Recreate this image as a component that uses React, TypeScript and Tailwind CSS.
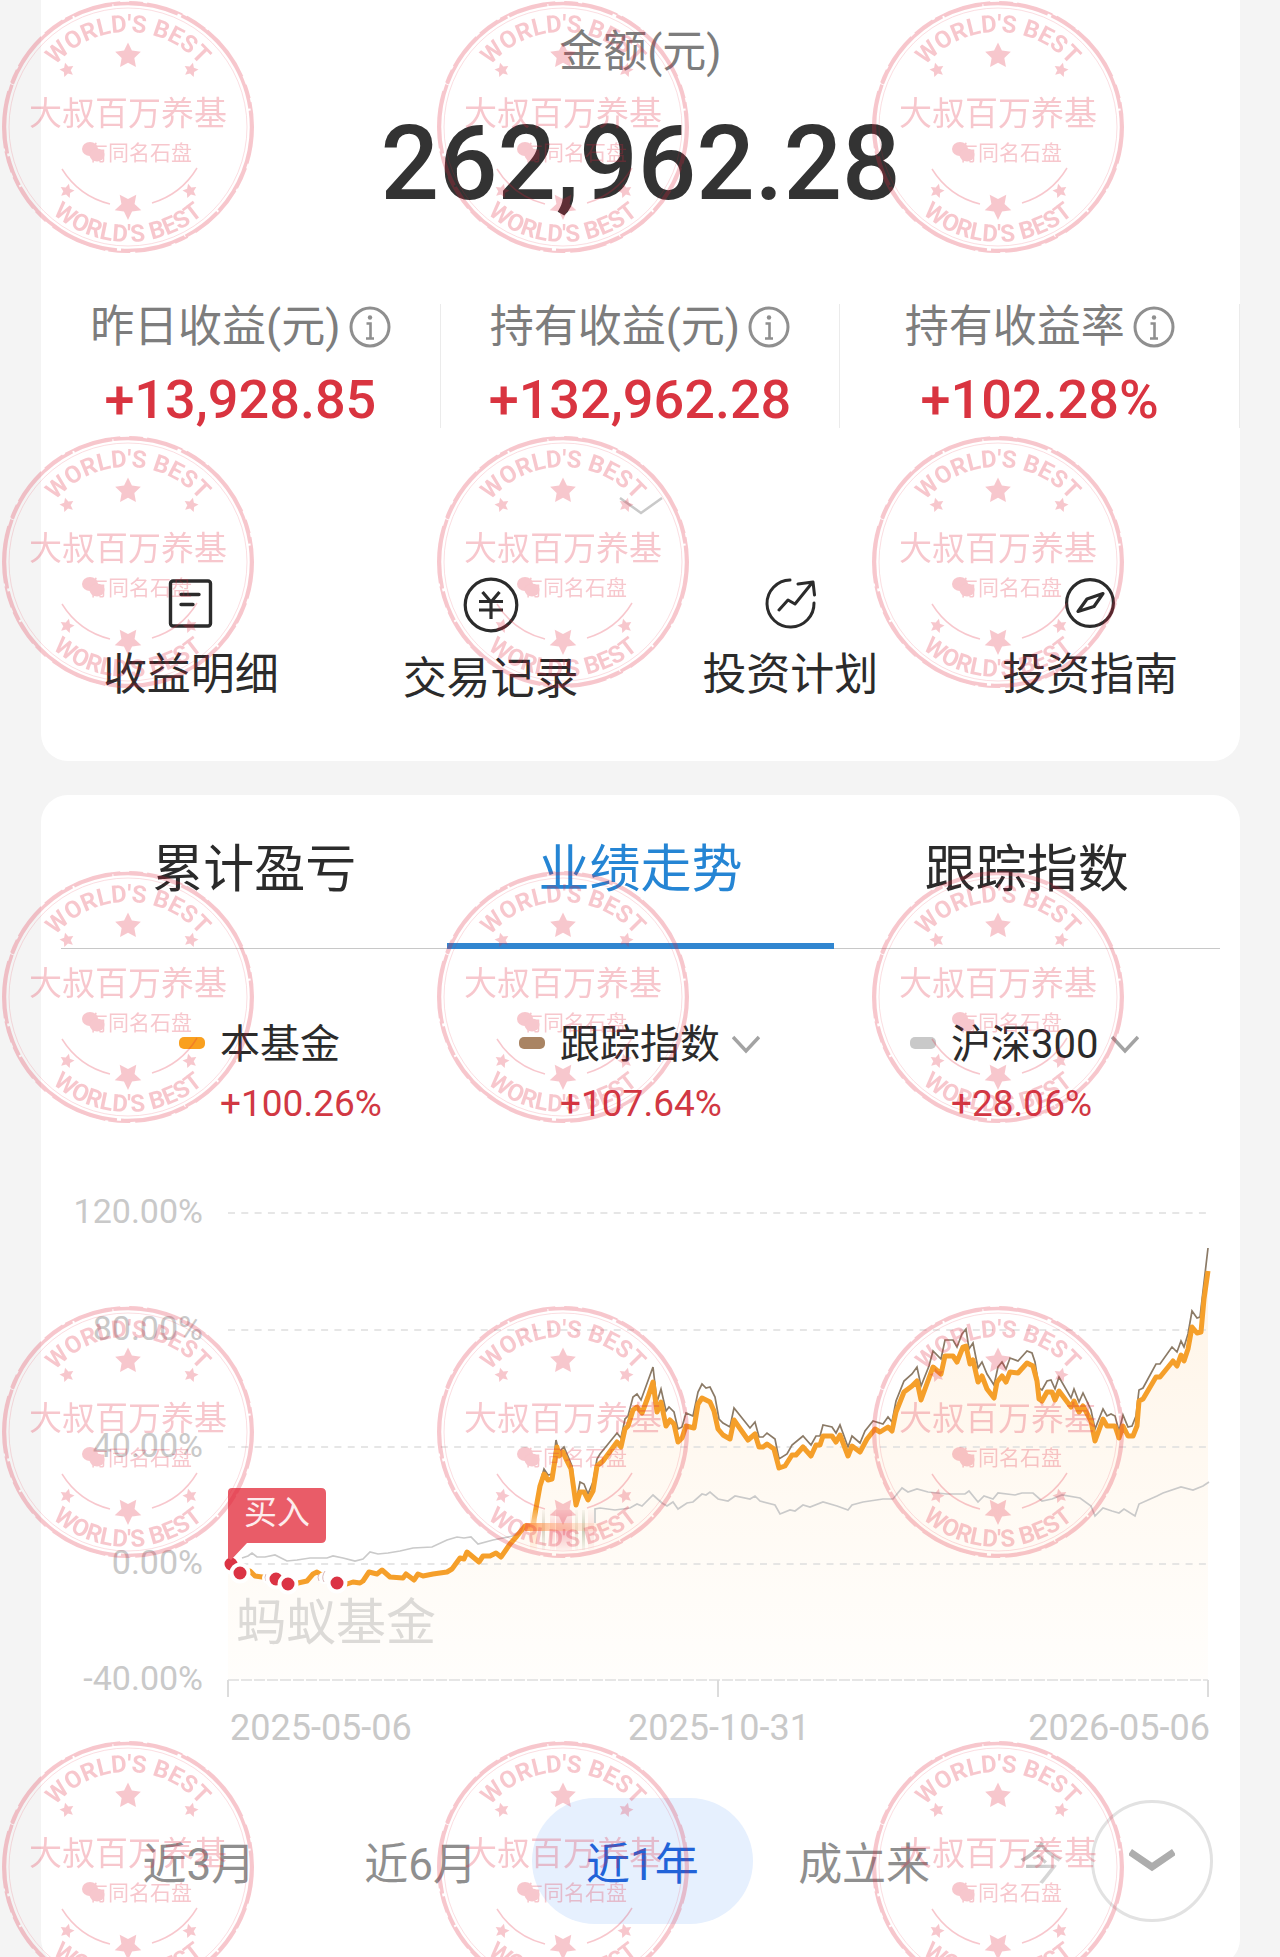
import React, { useState } from 'react'
import clsx from 'clsx'

const PINK = '#e2233b'
const STAR = 'M0 -10 L2.9 -4 L9.5 -3.1 L4.7 1.5 L5.9 8.1 L0 5 L-5.9 8.1 L-4.7 1.5 L-9.5 -3.1 L-2.9 -4 Z'

const fundLine =
    '3,351 12,360 22,358 27,363 34,364 41,364 48,366 60,371 70,370 79,368 85,361 89,359 97,364 109,370 119,371 125,369 132,370 135,368 141,359 149,361 154,357 162,364 175,365 178,361 186,367 190,361 195,363 205,361 219,359 224,356 232,345 236,346 239,339 251,349 255,343 262,343 268,340 273,344 282,331 289,323 297,313 305,313 307,301 312,273 316,261 320,267 324,266 329,234 331,243 335,239 339,248 343,256 348,292 352,279 356,279 360,287 365,278 369,253 375,248 389,229 393,234 397,216 400,213 405,197 409,194 414,200 420,184 425,169 429,199 433,189 438,213 442,207 446,211 450,229 454,225 458,213 466,215 470,191 474,185 482,189 486,198 490,216 495,222 502,226 506,207 520,227 527,221 531,234 535,234 539,231 546,236 551,255 557,253 564,242 568,242 575,234 583,243 588,232 592,232 595,223 604,223 608,229 612,222 620,243 624,233 632,239 639,226 647,216 652,219 660,214 664,218 668,199 676,179 684,173 689,168 693,187 697,176 705,154 713,161 717,143 725,143 729,149 735,134 738,133 742,151 745,147 750,169 754,163 759,176 766,185 769,169 774,163 778,169 782,159 790,160 799,150 805,153 809,168 811,186 814,188 819,179 824,179 827,187 831,178 843,194 846,188 851,199 855,193 863,208 867,228 875,206 879,213 887,213 891,225 895,213 900,223 905,223 909,213 911,188 915,186 928,164 932,164 945,148 949,153 953,142 956,148 960,136 964,114 969,120 973,119 976,86 980,58'

const indexLine =
    '307,300 312,270 316,256 320,262 324,261 328,227 331,239 336,234 344,253 348,290 352,269 356,271 360,281 365,269 369,246 372,241 389,220 393,225 397,206 400,203 405,184 409,181 413,187 425,154 429,189 433,176 438,198 441,194 446,199 450,216 454,214 458,200 465,203 470,179 474,171 478,175 482,174 487,184 491,206 495,210 502,214 506,195 522,215 527,209 531,224 535,224 539,220 547,226 551,246 559,241 564,232 575,223 583,232 588,223 592,223 595,212 604,214 608,220 612,212 620,234 624,223 632,230 637,218 645,208 655,211 660,204 664,209 668,188 676,168 684,161 689,154 693,173 701,153 705,138 713,146 717,127 725,127 729,134 734,121 738,116 741,136 745,130 750,155 754,149 759,161 766,172 770,154 774,149 778,156 782,145 790,148 799,138 804,140 807,149 811,175 814,177 819,168 823,167 827,176 831,164 843,185 846,176 851,189 855,180 863,197 867,216 875,196 879,203 883,201 887,203 891,218 895,202 900,214 904,213 908,203 911,177 915,175 928,151 932,151 944,134 949,139 953,128 956,134 960,121 964,98 969,105 972,104 980,35'

const marketStart =
    '14,345 20,343 24,340 29,344 37,344 47,342 59,348 69,347 82,345 99,345 105,343 115,345 127,348 135,346 142,339 150,341 160,340 172,338 185,335 204,334 219,327 229,324 236,325 243,324 250,331 265,327 285,323 292,318'

const marketEnd =
    '367,310 367,296 372,295 387,297 402,295 409,291 414,293 425,282 434,290 439,293 445,289 450,296 459,290 465,289 474,281 478,282 482,279 490,286 500,288 507,283 522,286 527,283 532,288 547,292 552,301 562,297 567,298 575,292 582,294 595,289 609,293 620,297 624,292 635,289 655,286 665,286 674,275 680,279 689,276 700,279 719,281 737,281 741,278 750,289 756,283 765,286 770,280 787,282 794,280 805,280 814,288 824,286 834,282 852,285 863,293 867,303 875,295 884,298 891,300 896,296 907,303 911,291 929,283 935,280 953,274 965,277 975,273 981,269'

const yTicks = [
    { label: '120.00%', y: 0 },
    { label: '80.00%', y: 117 },
    { label: '40.00%', y: 234 },
    { label: '0.00%', y: 351 },
    { label: '-40.00%', y: 467 },
]

const buyPoints = [
    [3, 351],
    [12, 360],
    [48, 366],
    [60, 371],
    [109, 370],
]

const stats = [
    { label: '昨日收益(元)', value: '+13,928.85' },
    { label: '持有收益(元)', value: '+132,962.28' },
    { label: '持有收益率', value: '+102.28%' },
]

const tabs = ['累计盈亏', '业绩走势', '跟踪指数']
const ranges = ['近3月', '近6月', '近1年', '成立来']

const InfoIcon = () => (
    <svg viewBox="0 0 42 42" className="w-[42px] h-[42px] shrink-0" fill="none" stroke="#8f8f8f">
        <circle cx="21" cy="21" r="19" strokeWidth="3" />
        <circle cx="21" cy="11.500" r="2.200" fill="#8f8f8f" stroke="none" />
        <path d="M17.500 17.500 H21.500 V32 M17 32.500 H25" strokeWidth="2.600" />
    </svg>
)

const DetailIcon = () => (
    <svg viewBox="-26 -26 52 52" className="w-[52px] h-[52px]" fill="none" stroke="#2b2b2b" strokeWidth="3.400" strokeLinecap="round">
        <rect x="-20.500" y="-22" width="40" height="45" rx="2.500" />
        <path d="M-10 -8.500 H8 M-10 1.500 H2" />
    </svg>
)

const RecordIcon = () => (
    <svg viewBox="-28 -28 56 56" className="w-14 h-14" fill="none" stroke="#2b2b2b" strokeWidth="3.200">
        <circle r="25.800" />
        <path d="M-8.500 -13 L0 -3 L8.500 -13 M-12 -3.500 H12 M-12 5 H12 M0 -3.500 V14" />
    </svg>
)

const PlanIcon = () => (
    <svg viewBox="-26 -26 52 52" className="w-[52px] h-[52px]" fill="none" stroke="#2b2b2b" strokeWidth="3" strokeLinecap="round" strokeLinejoin="round">
        <path d="M0 -23 A23.500 23.500 0 1 0 24 0" />
        <path d="M-11 7 L-2 -3 L5 1 L22 -20 M8 -19 L23 -21 L24.500 -8" />
    </svg>
)

const GuideIcon = () => (
    <svg viewBox="-26 -26 52 52" className="w-[52px] h-[52px]" fill="none" stroke="#2b2b2b" strokeWidth="3.200" strokeLinejoin="round">
        <circle r="23.400" />
        <path d="M13 -9.500 L-3 -4 L-12 8.500 L4 3.500 Z" />
    </svg>
)

const actions = [
    { label: '收益明细', icon: <DetailIcon /> },
    { label: '交易记录', icon: <RecordIcon /> },
    { label: '投资计划', icon: <PlanIcon /> },
    { label: '投资指南', icon: <GuideIcon /> },
]

const Stamp = ({ id }: { id: string }) => (
    <svg viewBox="-1 0 256 256" className="w-64 h-64" fill={PINK}>
        <defs>
            <path id={`${id}-top`} d="M32 127 A95 95 0 0 1 222 127" />
            <path id={`${id}-bottom`} d="M12 127 A115 115 0 0 0 242 127" />
        </defs>
        <g fill="none" stroke={PINK}>
            <circle cx="127" cy="127" r="123.500" strokeWidth="3.500" strokeDasharray="92 2 40 1 66 4 120 2 31 3 70 1" />
            <circle cx="127" cy="127" r="125" strokeWidth="2" strokeDasharray="37 5 22 3 58 9 14 4" />
            <circle cx="127" cy="127" r="119" strokeWidth="1" opacity="0.6" />
            <path d="M61 169 A79 79 0 0 0 109 204 M151 203 A79 79 0 0 0 196 168" strokeWidth="1.500" />
        </g>
        <g fontFamily="Roboto, sans-serif" fontWeight="700" fontSize="24" textAnchor="middle">
            <text><textPath href={`#${id}-top`} startOffset="50%">WORLD'S BEST</textPath></text>
            <text><textPath href={`#${id}-bottom`} startOffset="50%">WORLD'S BEST</textPath></text>
        </g>
        <path d={STAR} transform="translate(127 56) scale(1.35)" />
        <path d={STAR} transform="translate(66 70) rotate(-15) scale(0.75)" />
        <path d={STAR} transform="translate(190 70) rotate(15) scale(0.75)" />
        <path d={STAR} transform="translate(127 206) rotate(180) scale(1.4)" />
        <path d={STAR} transform="translate(66 191) rotate(15) scale(0.75)" />
        <path d={STAR} transform="translate(189 191) rotate(-15) scale(0.75)" />
        <g fontFamily="'Noto Sans CJK SC', sans-serif">
            <text x="127" y="125" fontSize="33" textAnchor="middle">大叔百万养基</text>
            <text x="191" y="160" fontSize="21" textAnchor="end">有同名石盘</text>
        </g>
        <ellipse cx="89" cy="149" rx="8" ry="7" />
        <ellipse cx="96" cy="155" rx="7.500" ry="6.500" />
    </svg>
)

const Watermark = () => (
    <div aria-hidden="true" className="absolute inset-0 overflow-hidden pointer-events-none opacity-25 grid grid-cols-[435px_435px_435px] auto-rows-[435px] content-start">
        {
            Array.from({ length: 15 }, (_, i) => <Stamp key={i} id={`stamp-${i}`} />)
        }
    </div>
)

interface LegendItemProps {
    name: string
    value: string
    swatch: string
    selectable?: boolean
}

const LegendItem = ({ name, value, swatch, selectable }: LegendItemProps) => (
    <div className="flex gap-[15px] whitespace-nowrap">
        <span className={clsx('mt-5 w-[26px] h-3 rounded-[5px] shrink-0', swatch)} />
        <div>
            <div className="flex items-center gap-3 h-14 text-[40px] leading-[56px] text-[#2b2b2b]">
                {
                    selectable ? (
                        <>
                            <select aria-label={name} className="appearance-none bg-transparent h-14 leading-[56px] outline-none">
                                <option>{name}</option>
                            </select>
                            <svg viewBox="0 0 28 20" className="w-7 h-5" fill="none" stroke="#a3a3a3" strokeWidth="3.500">
                                <path d="M1 2 L14 16 L27 2" />
                            </svg>
                        </>
                    ) : (
                        <span>{name}</span>
                    )
                }
            </div>
            <p className="mt-[9px] text-[37px] leading-[44px] text-[#d13843]">{value}</p>
        </div>
    </div>
)

const TrendChart = () => (
    <svg viewBox="-187 -40 1199 580" className="block w-full mt-[47px]" fontFamily="Roboto, 'Noto Sans CJK SC', sans-serif">
        <defs>
            <linearGradient id="area" x1="0" y1="0" x2="0" y2="1">
                <stop offset="0" stopColor="#ff9a1f" stopOpacity="0.11" />
                <stop offset="1" stopColor="#ffb84d" stopOpacity="0.02" />
            </linearGradient>
            <linearGradient id="smear" x1="0" y1="0" x2="1" y2="0">
                <stop offset="0" stopColor="#ff9440" stopOpacity="0.9" />
                <stop offset="0.3" stopColor="#ffa873" stopOpacity="0.5" />
                <stop offset="1" stopColor="#ffc9a0" stopOpacity="0" />
            </linearGradient>
            <linearGradient id="streak" x1="0" y1="0" x2="0" y2="1">
                <stop offset="0" stopColor="#fff" stopOpacity="0.1" />
                <stop offset="0.5" stopColor="#fff" stopOpacity="1" />
                <stop offset="1" stopColor="#fff" stopOpacity="0.1" />
            </linearGradient>
            <mask id="fade">
                <rect x="290" y="296" width="100" height="42" fill="url(#streak)" />
            </mask>
        </defs>

        <polygon points={`${fundLine} 980,467 0,467 0,351`} fill="url(#area)" />

        {
            yTicks.map((tick) => (
                <g key={tick.label}>
                    <line x1="0" x2="980" y1={tick.y} y2={tick.y} stroke="#dedede" strokeWidth="1.500" strokeDasharray={tick.y === 467 ? '11 2' : '7 6.300'} />
                    <text x="-25" y={tick.y + 10} textAnchor="end" fontSize="34" fill="#c9c9c9">{tick.label}</text>
                </g>
            ))
        }
        <path d="M0 467 V484 M490 467 V484 M980 467 V484" stroke="#dcdcdc" strokeWidth="2" />

        <text x="8" y="427" fontSize="50" fill="#dcdad7">蚂蚁基金</text>

        <polyline points={marketStart} fill="none" stroke="#cacaca" strokeWidth="1.700" />
        <polyline points={marketEnd} fill="none" stroke="#cacaca" strokeWidth="1.700" />
        <polyline points={indexLine} fill="none" stroke="#8b7a66" strokeWidth="1.700" />
        <polyline points={fundLine} fill="none" stroke="#f59f2a" strokeWidth="5" strokeLinejoin="round" />

        <g mask="url(#fade)">
            <rect x="302" y="297" width="7" height="40" fill="#ffe0bf" />
            <rect x="314" y="297" width="3" height="40" fill="#d9d3c4" />
            <rect x="322" y="297" width="5" height="40" fill="#fbd5d4" />
            <rect x="328" y="297" width="16" height="40" fill="#f5b9bf" />
            <rect x="347" y="297" width="3" height="40" fill="#e6e2d2" />
            <rect x="354" y="297" width="3" height="40" fill="#c9cdb8" />
            <rect x="360" y="297" width="6" height="40" fill="#fbe0dc" />
        </g>
        <rect x="297" y="310" width="95" height="8" fill="url(#smear)" />

        {
            [40, 96, 102].map((x) => (
                <circle key={x} cx={x} cy={365} r="4" fill="#fff" stroke="#fff" strokeWidth="4" />
            ))
        }
        <path d="M38 361 Q36 364 38 368 M91 361 Q89 364 91 368 M97 358 Q93 364 96 369" fill="none" stroke="#d9b9bb" strokeWidth="1" />
        {
            buyPoints.map(([x, y]) => (
                <circle key={x} cx={x} cy={y} r="8.500" fill="#db3344" stroke="#fff" strokeWidth="4" />
            ))
        }
        <path d="M4 275 H93 Q98 275 98 280 V325 Q98 330 93 330 H19 L3 347 L0 345 V279 Q0 275 4 275 Z" fill="#e95c68" />
        <text x="49" y="311" fontSize="33" textAnchor="middle" fill="#fdeced">买入</text>

        <g fontSize="36" fill="#c9c9c9">
            <text x="2" y="527">2025-05-06</text>
            <text x="491" y="527" textAnchor="middle">2025-10-31</text>
            <text x="982" y="527" textAnchor="end">2026-05-06</text>
        </g>
    </svg>
)

const App = () => {
    const [activeTab, setActiveTab] = useState('业绩走势')
    const [activeRange, setActiveRange] = useState('近1年')

    return (
        <div className="relative h-screen overflow-hidden bg-[#f4f4f4] pl-[41px] pr-10 font-[Roboto,'Noto_Sans_CJK_SC',sans-serif]">
            <section className="bg-white rounded-b-[27px] pt-5 pb-[52px]">
                <div className="text-center">
                    <p className="text-[44px] leading-[64px] text-[#7d7d7d]">金额(元)</p>
                    <p className="mt-5 text-[103px] leading-[120px] font-medium text-[#333]">262,962.28</p>
                </div>

                <div className="mt-20 grid grid-cols-3">
                    {
                        stats.map((stat) => (
                            <div key={stat.label} className="flex flex-col items-center border-r border-[#ebebeb]">
                                <div className="flex items-center gap-2 text-[44px] leading-[46px] text-[#7d7d7d] whitespace-nowrap">
                                    <span>{stat.label}</span>
                                    <InfoIcon />
                                </div>
                                <p className="mt-[22px] text-[54px] leading-[56px] font-medium text-[#d93440]">{stat.value}</p>
                            </div>
                        ))
                    }
                </div>

                <button aria-label="展开" className="block mx-auto mt-[69px]">
                    <svg viewBox="0 0 44 18" className="w-11 h-[18px]" fill="none" stroke="#c9c9c9" strokeWidth="2.500">
                        <path d="M1 1 L22 16 L43 1" />
                    </svg>
                </button>

                <div className="mt-[62px] grid grid-cols-4 items-start">
                    {
                        actions.map((action) => (
                            <button key={action.label} className="flex flex-col items-center gap-4 text-[44px] leading-[60px] text-[#2b2b2b] whitespace-nowrap">
                                {action.icon}
                                <span>{action.label}</span>
                            </button>
                        ))
                    }
                </div>
            </section>

            <section className="mt-[34px] bg-white rounded-[27px] pb-[42px]">
                <div role="tablist" className="mx-5 grid grid-cols-3 shadow-[inset_0_-1px_0_#c8c8c8]">
                    {
                        tabs.map((tab) => (
                            <button
                                key={tab}
                                role="tab"
                                aria-selected={activeTab === tab}
                                onClick={() => setActiveTab(tab)}
                                className={clsx(
                                    'pt-[39px] pb-[37px] border-b-[6px] text-[51px] leading-[72px] whitespace-nowrap',
                                    activeTab === tab ? 'text-[#2585d4] border-[#3186d0]' : 'text-[#2b2b2b] border-transparent'
                                )}
                            >
                                {tab}
                            </button>
                        ))
                    }
                </div>

                <div className="mt-[68px] pl-[138px] pr-[98px] grid grid-cols-[340fr_391fr_232fr]">
                    <LegendItem name="本基金" value="+100.26%" swatch="bg-[#f9a01f]" />
                    <LegendItem name="跟踪指数" value="+107.64%" swatch="bg-[#a98463]" selectable />
                    <LegendItem name="沪深300" value="+28.06%" swatch="bg-[#c9c9c9]" selectable />
                </div>

                <TrendChart />

                <div className="mt-[45px] pl-[47px] pr-[27px] flex items-center text-[44px] text-[#8f8f8f] whitespace-nowrap">
                    {
                        ranges.map((range) => (
                            <button
                                key={range}
                                onClick={() => setActiveRange(range)}
                                className={clsx('flex-1 h-[126px] pt-2 rounded-full', activeRange === range && 'bg-[#e6f0fe] text-[#2163d8]')}
                            >
                                {range}
                            </button>
                        ))
                    }
                    <span className="ml-11 pt-2 bg-linear-to-br from-[#a8a8a8] to-[#eeeeee] bg-clip-text text-transparent">今</span>
                    <button aria-label="更多" className="ml-7 w-[122px] h-[122px] rounded-full border-[3px] border-[#e2e2e2] flex items-center justify-center">
                        <svg viewBox="0 0 46 26" className="w-[46px] h-[26px]" fill="none" stroke="#adadad" strokeWidth="7">
                            <path d="M1 4 L23 19 L45 4" />
                        </svg>
                    </button>
                </div>
            </section>

            <Watermark />
        </div>
    )
}

export default App
